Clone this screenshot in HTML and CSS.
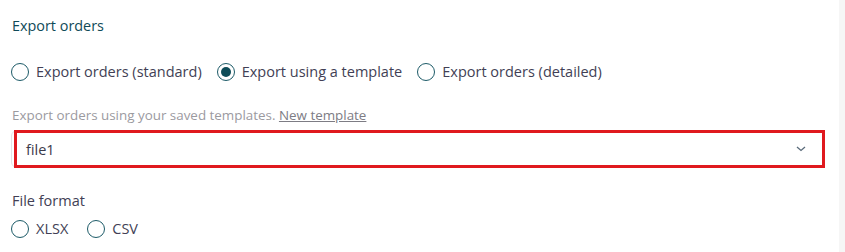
FILE: index.html
```html
<!DOCTYPE html>
<html>
<head>
<meta charset="utf-8">
<link rel="stylesheet" href="styles.css">
</head>
<body>
<div class="page">
  <main class="panel">
    <h2 class="title">Export orders</h2>
    <div class="radio-row">
      <label class="radio"><span class="dot"></span>Export orders (standard)</label>
      <label class="radio"><span class="dot checked"></span>Export using a template</label>
      <label class="radio"><span class="dot"></span>Export orders (detailed)</label>
    </div>
    <p class="help">Export orders using your saved templates. <a class="link" href="#">New template</a></p>
    <div class="select">
      <div class="select-box">
        <span class="value">file1</span>
        <svg class="chev" width="10" height="6" viewBox="0 0 10 6"><path d="M1 1 L5 4.5 L9 1" fill="none" stroke="#5a6b7a" stroke-width="1.3"/></svg>
      </div>
      <div class="highlight"></div>
    </div>
    <div class="label">File format</div>
    <div class="radio-row small">
      <label class="radio"><span class="dot"></span>XLSX</label>
      <label class="radio"><span class="dot"></span>CSV</label>
    </div>
  </main>
  <aside class="strip"></aside>
</div>
</body>
</html>
```
FILE: styles.css
```css
html, body { margin: 0; padding: 0; background: #fff; }
body { font-family: "Open Sans", Lato, sans-serif; color: #47455a; }
.page { display: flex; width: 845px; height: 252px; overflow: hidden; }
.panel { flex: 1; padding: 0 14px 0 11px; }
.strip { width: 6px; background: #f6f6f6; }
.title { margin: 16px 0 0 1px; font-size: 14.4px; font-weight: 500; color: #0f4a58; line-height: 20px; }
.radio-row { display: flex; gap: 15px; margin-top: 26px; align-items: center; }
.radio { display: flex; align-items: center; gap: 7px; font-size: 14.5px; line-height: 20px; color: #423f55; }
.dot { width: 16px; height: 16px; border: 1.6px solid #1d5b68; border-radius: 50%; box-sizing: content-box; display: inline-block; position: relative; }
.dot.checked::after { content: ""; position: absolute; left: 3px; top: 3px; width: 10px; height: 10px; border-radius: 50%; background: #0d4b57; }
.help { margin: 24px 0 0 1px; font-size: 13.4px; line-height: 18px; color: #9b9a9f; }
.link { color: #7d7c84; text-decoration: underline; }
.select { position: relative; margin-top: 6px; height: 38px; }
.select-box { height: 36px; border: 1px solid #e3e3e6; border-radius: 6px; display: flex; align-items: center; justify-content: space-between; padding: 0 18px 0 14px; }
.value { font-size: 14.5px; color: #3b3a4a; }
.highlight { position: absolute; left: 3px; right: 0; top: 0; bottom: 0; border: 3px solid #e0191e; }
.label { margin-top: 23px; margin-left: 1px; font-size: 14.5px; line-height: 20px; color: #423f55; }
.radio-row.small { margin-top: 8px; gap: 19px; }
```
